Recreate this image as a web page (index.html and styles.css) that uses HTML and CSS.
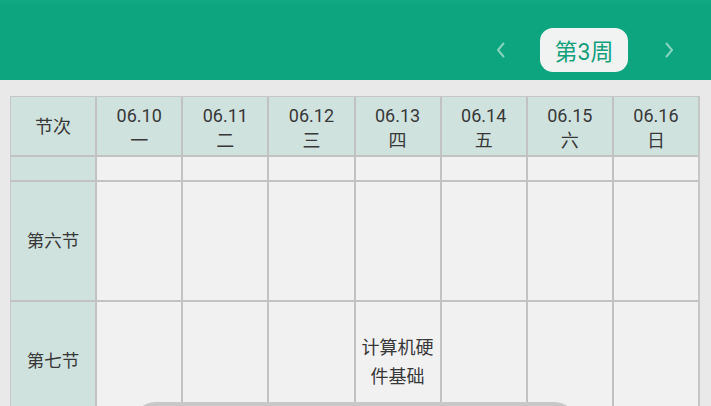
FILE: index.html
```html
<!DOCTYPE html>
<html lang="zh">
<head>
<meta charset="utf-8">
<title>课表</title>
<link rel="stylesheet" href="styles.css">
</head>
<body>
<header class="topbar">
  <div class="week-nav">
    <svg class="chev" width="12" height="18" viewBox="0 0 12 18"><path d="M8.5 2.5 L3 9 L8.5 15.5" fill="none" stroke="currentColor" stroke-width="2" stroke-linecap="round" stroke-linejoin="round"/></svg>
    <div class="week-pill">第3周</div>
    <svg class="chev" width="12" height="18" viewBox="0 0 12 18"><path d="M3.5 2.5 L9 9 L3.5 15.5" fill="none" stroke="currentColor" stroke-width="2" stroke-linecap="round" stroke-linejoin="round"/></svg>
  </div>
</header>
<main class="content">
  <div class="grid">
    <div class="cell head">节次</div>
    <div class="cell head day"><span>06.10</span><span>一</span></div>
    <div class="cell head day"><span>06.11</span><span>二</span></div>
    <div class="cell head day"><span>06.12</span><span>三</span></div>
    <div class="cell head day"><span>06.13</span><span>四</span></div>
    <div class="cell head day"><span>06.14</span><span>五</span></div>
    <div class="cell head day"><span>06.15</span><span>六</span></div>
    <div class="cell head day"><span>06.16</span><span>日</span></div>

    <div class="cell side"></div>
    <div class="cell"></div><div class="cell"></div><div class="cell"></div><div class="cell"></div><div class="cell"></div><div class="cell"></div><div class="cell"></div>

    <div class="cell side">第六节</div>
    <div class="cell"></div><div class="cell"></div><div class="cell"></div><div class="cell"></div><div class="cell"></div><div class="cell"></div><div class="cell"></div>

    <div class="cell side">第七节</div>
    <div class="cell"></div><div class="cell"></div><div class="cell"></div>
    <div class="cell course">计算机硬<br>件基础</div>
    <div class="cell"></div><div class="cell"></div><div class="cell"></div>
  </div>
</main>
<div class="toast"></div>
</body>
</html>
```
FILE: styles.css
```css
html, body {
  margin: 0;
  padding: 0;
  height: 406px;
  overflow: hidden;
  background: #e9e9e9;
  font-family: Roboto, "Noto Sans CJK SC", sans-serif;
  color: #333;
}
.topbar {
  height: 80px;
  background: linear-gradient(#0fa983 0, #0ca57f 8px, #0ca57f 100%);
  display: flex;
  justify-content: flex-end;
  align-items: center;
  padding-right: 36px;
  box-sizing: border-box;
}
.week-nav {
  display: flex;
  align-items: center;
  margin-top: 20px;
}
.chev {
  color: #86d3c0;
}
.week-pill {
  margin: 0 35px 0 33px;
  width: 88px;
  height: 44px;
  border-radius: 13px;
  background: #f1f3f2;
  color: #14a07c;
  font-size: 23px;
  display: flex;
  align-items: center;
  justify-content: center;
}
.content {
  padding: 16px 11px 0 10px;
}
.grid {
  display: grid;
  grid-template-columns: repeat(8, 1fr);
  grid-template-rows: 58px 23px 118px 118px;
  gap: 2px;
  background: #c2c2c2;
  border: 1px solid #c6c6c6;
  border-right-width: 2px;
}
.cell {
  background: #f1f1f1;
  display: flex;
  flex-direction: column;
  align-items: center;
  justify-content: center;
  font-size: 18px;
  line-height: 25px;
  text-align: center;
  color: #383838;
}
.head, .side {
  background: #d0e2de;
}
.day {
  padding-top: 4px;
  box-sizing: border-box;
}
.side {
  font-size: 17.5px;
}
.course {
  line-height: 29px;
  padding-top: 2px;
}
.toast {
  position: absolute;
  left: 135px;
  top: 402px;
  width: 440px;
  height: 40px;
  border-radius: 20px;
  background: #c8c8c8;
}
```
